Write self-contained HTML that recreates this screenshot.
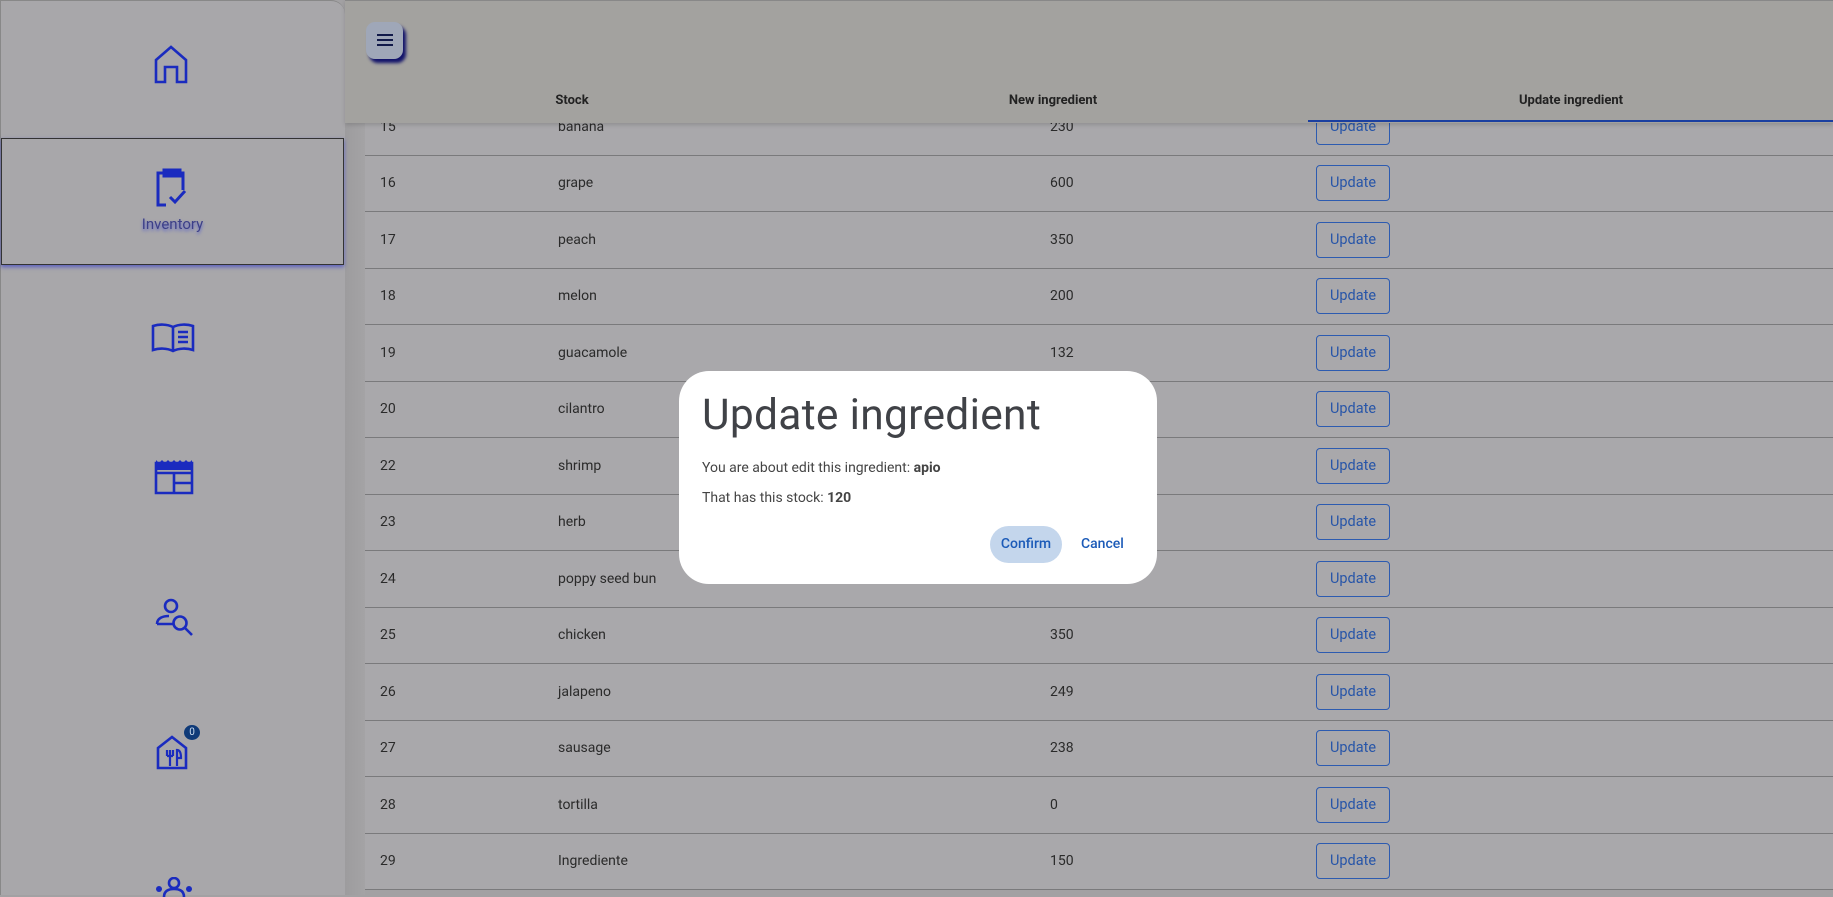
<!DOCTYPE html>
<html><head><meta charset="utf-8"><style>
*{box-sizing:border-box;margin:0;padding:0}
body{width:1833px;height:895px;overflow:hidden;background:#a2a1a3;font-family:Roboto,"Liberation Sans",sans-serif;position:relative}
.side{position:absolute;left:0;top:0;width:345px;height:895px;background:#a8a7aa;border-radius:0 14px 0 0;border-left:1px solid #888;border-top:1px solid #888}
.gut{position:absolute;left:345px;top:0;width:20px;height:895px;background:linear-gradient(90deg,#9d9c9e,#a4a3a5)}
.inv{position:absolute;left:1px;top:138px;width:343px;height:127px;border:1.5px solid #333;box-shadow:0 2px 4px #5a5fc0}
.inv span{position:absolute;top:76px;width:100%;text-align:center;font-size:15px;color:#3c3f88;text-shadow:0 2px 3px #5860c8}
.ic{position:absolute}
.hdr{position:absolute;left:345px;top:0;right:0;height:123px;background:#a3a29f;border-top:1px solid #888;box-shadow:0 2px 4px rgba(0,0,0,.15);z-index:2}
.menu{position:absolute;left:21px;top:21px;width:37px;height:37px;border-radius:9px;background:#9fa7b8;box-shadow:3px 4px 3px #12136a}
.menu i{position:absolute;left:11px;width:16px;height:2px;background:#111a4a}
.tab{position:absolute;top:92px;font-size:13px;font-weight:bold;color:#222;transform:translateX(-50%)}
.ul{position:absolute;left:963px;right:0;top:119px;height:2px;background:#1b3fa0}
.row{position:absolute;left:365px;right:0;height:56.5px;background:#a9a8ab;border-bottom:1.5px solid #7a7a7c;font-size:14px;color:#2a2a2a}
.row span{position:absolute;top:50%;transform:translateY(-50%)}
.btn{position:absolute;left:951px;top:50%;transform:translateY(-50%);width:74px;height:36px;border:1.2px solid #2d5bb0;border-radius:4px;color:#2755a8;font-size:14.5px;text-align:center;line-height:34px}
.dlg{position:absolute;left:679px;top:371px;width:478px;height:213px;background:#fff;border-radius:30px;z-index:5}
.dlg h1{position:absolute;left:23px;top:20px;font-weight:normal;font-size:42.5px;color:#404247;letter-spacing:.3px}
.dlg p{position:absolute;left:23px;font-size:14px;color:#444}
.cf{position:absolute;left:311px;top:155px;width:72px;height:37px;border-radius:19px;background:#c4d6ec;color:#1c5bb8;font-size:14px;font-weight:500;text-align:center;line-height:37px}
.cc{position:absolute;left:402px;top:155px;line-height:37px;color:#1c5bb8;font-size:14px;font-weight:500}
</style></head><body>
<div class="side"></div>
<div class="gut"></div>
<div class="inv"><span>Inventory</span></div>
<svg class="ic" style="left:153px;top:45px" width="36" height="40" viewBox="0 0 36 40" fill="none" stroke="#1a2bbf" stroke-width="2.6"><path d="M3 37V15L18 2 33 15V37H24V22H12V37Z"/></svg>
<svg class="ic" style="left:154px;top:168px" width="36" height="40" viewBox="0 0 36 40" fill="none" stroke="#1a2bbf" stroke-width="3"><path d="M14 5H4V37H12M26 5H29V22"/><rect x="10" y="2" width="16" height="6" fill="#1a2bbf"/><path d="M16 29l5 5 10-11"/></svg>
<svg class="ic" style="left:151px;top:322px" width="44" height="32" viewBox="0 0 44 32" fill="none" stroke="#1a2bbf" stroke-width="2.6"><path d="M2 4C8 2 16 2 22 5 28 2 36 2 42 4V28C36 26 28 26 22 29 16 26 8 26 2 28ZM22 5V29M27 10H37M27 15H37M27 20H37"/></svg>
<svg class="ic" style="left:154px;top:459px" width="40" height="36" viewBox="0 0 40 36" fill="none" stroke="#1a2bbf" stroke-width="2.6"><path d="M2 4h36v30H2zM2 14h36M20 24h18M20 14v20"/><path d="M2 1l3 3 3-3 3 3 3-3 3 3 3-3 3 3 3-3 3 3 3-3 3 3 3-3v10H2z" fill="#1a2bbf" stroke="none"/></svg>
<svg class="ic" style="left:155px;top:598px" width="42" height="38" viewBox="0 0 42 38" fill="none" stroke="#1a2bbf" stroke-width="2.6"><circle cx="16" cy="8" r="6"/><path d="M2 26H18M2 26C2 20 8 18 14 18"/><circle cx="25" cy="25" r="6.5"/><path d="M30 30l7 7"/></svg>
<svg class="ic" style="left:156px;top:734px" width="34" height="36" viewBox="0 0 34 36" fill="none" stroke="#1a2bbf" stroke-width="2.6"><path d="M2 34V14L16 3 30 14V34Z"/><path d="M11 16v6M14 16v16M17 16v6M11 22h6M21 32V16c3 0 4 4 4 8h-4" stroke-width="2.2"/></svg>
<div style="position:absolute;left:184px;top:725px;width:16px;height:15px;border-radius:50%;background:#0f3a78;color:#cde;font-size:10px;text-align:center;line-height:15px">0</div>
<svg class="ic" style="left:152px;top:877px" width="44" height="20" viewBox="0 0 44 20" fill="#1a2bbf"><circle cx="22" cy="6" r="5" fill="none" stroke="#1a2bbf" stroke-width="2.6"/><circle cx="7" cy="12" r="3"/><circle cx="37" cy="12" r="3"/><path d="M12 20c0-6 4-8 10-8s10 2 10 8" fill="none" stroke="#1a2bbf" stroke-width="2.6"/></svg>

<div class="hdr">
<div class="menu"><i style="top:12px"></i><i style="top:17px"></i><i style="top:22px"></i></div>
<div class="tab" style="left:227px">Stock</div>
<div class="tab" style="left:708px">New ingredient</div>
<div class="tab" style="left:1226px">Update ingredient</div>
<div class="ul"></div>
</div>

<div class="row" style="top:99px"><span style="left:15px">15</span><span style="left:193px">banana</span><span style="left:685px">230</span><div class="btn">Update</div></div>
<div class="row" style="top:155.5px"><span style="left:15px">16</span><span style="left:193px">grape</span><span style="left:685px">600</span><div class="btn">Update</div></div>
<div class="row" style="top:212px"><span style="left:15px">17</span><span style="left:193px">peach</span><span style="left:685px">350</span><div class="btn">Update</div></div>
<div class="row" style="top:268.5px"><span style="left:15px">18</span><span style="left:193px">melon</span><span style="left:685px">200</span><div class="btn">Update</div></div>
<div class="row" style="top:325px"><span style="left:15px">19</span><span style="left:193px">guacamole</span><span style="left:685px">132</span><div class="btn">Update</div></div>
<div class="row" style="top:381.5px"><span style="left:15px">20</span><span style="left:193px">cilantro</span><span style="left:685px">0</span><div class="btn">Update</div></div>
<div class="row" style="top:438px"><span style="left:15px">22</span><span style="left:193px">shrimp</span><span style="left:685px">0</span><div class="btn">Update</div></div>
<div class="row" style="top:494.5px"><span style="left:15px">23</span><span style="left:193px">herb</span><span style="left:685px">0</span><div class="btn">Update</div></div>
<div class="row" style="top:551px"><span style="left:15px">24</span><span style="left:193px">poppy seed bun</span><span style="left:685px">0</span><div class="btn">Update</div></div>
<div class="row" style="top:607.5px"><span style="left:15px">25</span><span style="left:193px">chicken</span><span style="left:685px">350</span><div class="btn">Update</div></div>
<div class="row" style="top:664px"><span style="left:15px">26</span><span style="left:193px">jalapeno</span><span style="left:685px">249</span><div class="btn">Update</div></div>
<div class="row" style="top:720.5px"><span style="left:15px">27</span><span style="left:193px">sausage</span><span style="left:685px">238</span><div class="btn">Update</div></div>
<div class="row" style="top:777px"><span style="left:15px">28</span><span style="left:193px">tortilla</span><span style="left:685px">0</span><div class="btn">Update</div></div>
<div class="row" style="top:833.5px"><span style="left:15px">29</span><span style="left:193px">Ingrediente</span><span style="left:685px">150</span><div class="btn">Update</div></div>

<div class="dlg">
<h1>Update ingredient</h1>
<p style="top:89px">You are about edit this ingredient: <b>apio</b></p>
<p style="top:119px">That has this stock: <b>120</b></p>
<div class="cf">Confirm</div>
<div class="cc">Cancel</div>
</div>
</body></html>
